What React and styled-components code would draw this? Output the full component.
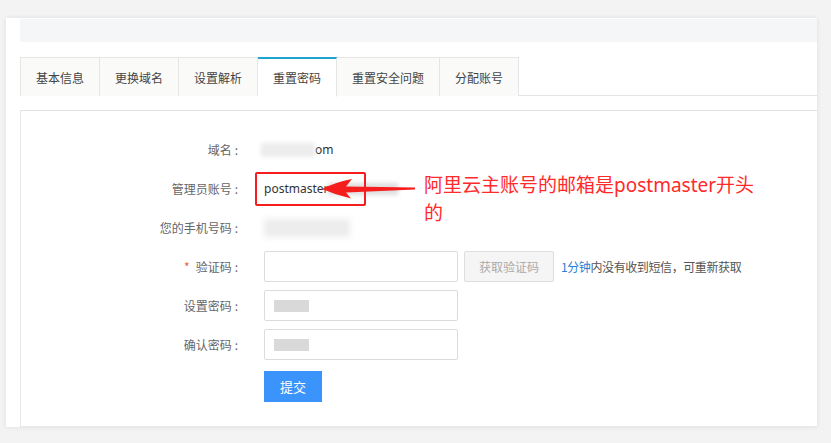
import styled, { createGlobalStyle } from "styled-components";

const GlobalStyle = createGlobalStyle`
  html, body {
    margin: 0;
    padding: 0;
    background: #f3f3f3;
  }
  body {
    font-family: "Noto Sans", "Noto Sans CJK SC", sans-serif;
    font-size: 12px;
    color: #333;
  }
  * {
    box-sizing: border-box;
  }
`;

const Page = styled.div`
  width: 831px;
  height: 443px;
  padding: 18px 0 0 6px;
  overflow: hidden;
`;

const Card = styled.div`
  position: relative;
  width: 811px;
  height: 409px;
  background: #fff;
  box-shadow: 0 0 5px rgba(0, 0, 0, 0.09);
  padding: 1px 0 0 14px;
  display: flex;
  flex-direction: column;
`;

const Band = styled.div`
  height: 23px;
  background: #f5f6f8;
`;

const TabBar = styled.div`
  display: flex;
  margin-top: 15px;
  height: 39px;
  border-bottom: 1px solid #e4e4e4;
`;

const Tab = styled.div`
  display: flex;
  align-items: center;
  justify-content: center;
  padding: 0 15px;
  font-family: "Noto Sans CJK SC", sans-serif;
  font-size: 12px;
  color: #444;
  background: ${(p) => (p.$active ? "#fff" : "#fafaf9")};
  border: 1px solid #e6e6e6;
  border-left: ${(p) => (p.$first ? "1px solid #e6e6e6" : "none")};
  border-top: ${(p) => (p.$active ? "2px solid #1fa3d0" : "1px solid #e6e6e6")};
  border-bottom: ${(p) => (p.$active ? "1px solid #fff" : "none")};
  margin-bottom: ${(p) => (p.$active ? "-1px" : "0")};
  height: ${(p) => (p.$active ? "40px" : "39px")};
`;

const Content = styled.div`
  flex: 1;
  margin-top: 14px;
  border-top: 1px solid #e2e2e2;
  border-left: 1px solid #e8e8e8;
  border-bottom: 1px solid #e8e8e8;
  padding-top: 23px;
`;

const Form = styled.div`
  display: grid;
  grid-template-columns: 218px 1fr;
  column-gap: 25px;
  row-gap: 8px;
  grid-auto-rows: 31px;
`;

const Label = styled.div`
  display: flex;
  align-items: center;
  justify-content: flex-end;
  padding-right: 1px;
  font-family: "Noto Sans CJK SC", sans-serif;
  font-size: 12px;
  color: #666;

  &::after {
    content: ":";
    margin-left: 3px;
  }
`;

const Star = styled.span`
  color: #e8623c;
  margin-right: 6px;
`;

const Value = styled.div`
  display: flex;
  align-items: center;
  font-size: 12px;
  color: #333;
`;

const Blur = styled.span`
  display: inline-block;
  width: ${(p) => p.$w}px;
  height: ${(p) => p.$h || 14}px;
  background: ${(p) => p.$c || "#e4e4e4"};
  filter: blur(${(p) => p.$b || 2}px);
  margin-left: ${(p) => p.$ml || 0}px;
`;

const Field = styled.div`
  width: 194px;
  height: 31px;
  border: 1px solid #dcdcdc;
  border-radius: 2px;
  background: #fff;
  display: flex;
  align-items: center;
  padding-left: 9px;
`;

const CodeButton = styled.div`
  width: 90px;
  height: 31px;
  margin-left: 6px;
  border: 1px solid #dedede;
  border-radius: 2px;
  background: #f5f5f5;
  color: #aaa;
  font-family: "Noto Sans CJK SC", sans-serif;
  font-size: 12px;
  display: flex;
  align-items: center;
  justify-content: center;
`;

const Hint = styled.span`
  margin-left: 7px;
  font-family: "Noto Sans CJK SC", sans-serif;
  font-size: 12px;
  letter-spacing: -0.4px;
  color: #555;

  b {
    font-weight: normal;
    color: #2b7fd3;
  }
`;

const Submit = styled.button`
  width: 58px;
  height: 31px;
  margin-top: 6px;
  border: none;
  background: #3a94fc;
  color: #fff;
  font-family: "Noto Sans CJK SC", sans-serif;
  font-size: 13px;
  padding: 0;
`;

const RedBox = styled.div`
  position: absolute;
  left: 249px;
  top: 154px;
  width: 111px;
  height: 34px;
  border: 2px solid #f51d1d;
  border-radius: 2px;
`;

const Arrow = styled.svg`
  position: absolute;
  left: 310px;
  top: 157px;
  width: 102px;
  height: 28px;
`;

const Note = styled.div`
  position: absolute;
  left: 418px;
  top: 153px;
  width: 380px;
  font-family: "Noto Sans", "Noto Sans CJK SC", sans-serif;
  font-size: 19px;
  line-height: 28px;
  color: #ff2a2a;
`;

const tabs = ["基本信息", "更换域名", "设置解析", "重置密码", "重置安全问题", "分配账号"];

export default function App() {
  return (
    <Page>
      <GlobalStyle />
      <Card>
        <Band />
        <TabBar>
          {tabs.map((t, i) => (
            <Tab key={t} $first={i === 0} $active={i === 3}>
              {t}
            </Tab>
          ))}
        </TabBar>
        <Content>
          <Form>
            <Label>域名</Label>
            <Value>
              <Blur $w={54} $ml={-3} $c="#ececec" />
              om
            </Value>

            <Label>管理员账号</Label>
            <Value>
              postmaster
              <Blur $w={70} $h={12} $c="#dedede" />
            </Value>

            <Label>您的手机号码</Label>
            <Value>
              <Blur $w={86} $h={18} $c="#ececec" $b={3} />
            </Value>

            <Label>
              <Star>*</Star>验证码
            </Label>
            <Value>
              <Field />
              <CodeButton>获取验证码</CodeButton>
              <Hint>
                <b>1分钟</b>内没有收到短信，可重新获取
              </Hint>
            </Value>

            <Label>设置密码</Label>
            <Value>
              <Field>
                <Blur $w={35} $h={12} $c="#d9d9d9" $b={0.6} />
              </Field>
            </Value>

            <Label>确认密码</Label>
            <Value>
              <Field>
                <Blur $w={35} $h={12} $c="#d9d9d9" $b={0.6} />
              </Field>
            </Value>

            <span />
            <Value>
              <Submit>提交</Submit>
            </Value>
          </Form>
        </Content>

        <RedBox />
        <Arrow viewBox="316 175 102 28">
          <path
            d="M322 189 Q336 182 352 179 L346 186.5 L415 187.6 L415 189.6 L346 192.5 L351 198.5 Q336 195 322 189 Z"
            fill="#f51d1d"
          />
        </Arrow>
        <Note>
          阿里云主账号的邮箱是postmaster开头
          <br />的
        </Note>
      </Card>
    </Page>
  );
}
